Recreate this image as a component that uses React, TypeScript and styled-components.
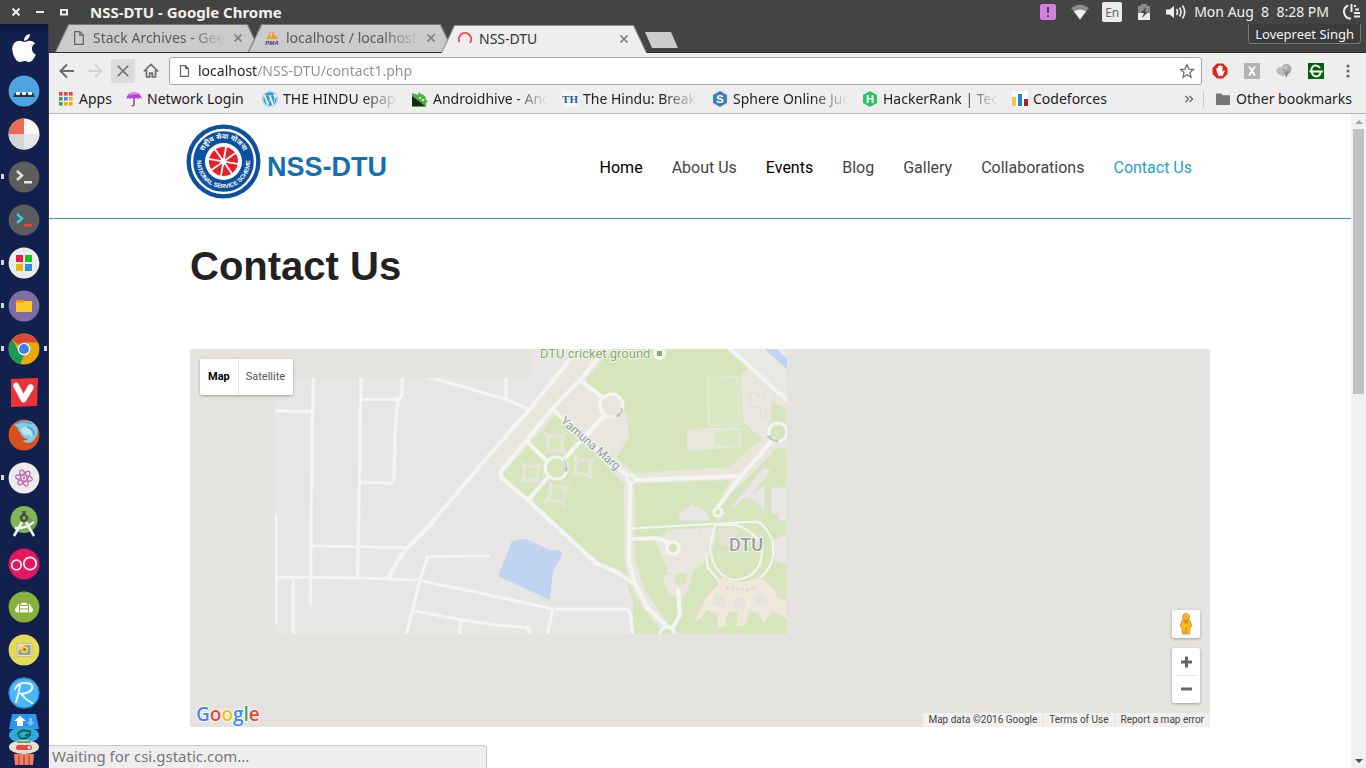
import React from "react";
import styled, { createGlobalStyle } from "styled-components";
import { FaApple, FaWordpress } from "react-icons/fa";

const ui = `"Noto Sans", "Open Sans", sans-serif`;

const Global = createGlobalStyle`
  *, *::before, *::after { box-sizing: border-box; }
  body { margin: 0; background: #fff; overflow: hidden; }
  button { border: 0; padding: 0; background: none; font: inherit; color: inherit; cursor: pointer; }
  a { color: inherit; text-decoration: none; }
  svg { display: block; }
`;

const Desktop = styled.div`
  display: flex;
  flex-direction: column;
  height: 100vh;
  font-family: ${ui};
`;

/* ---------- top panel ---------- */

const Panel = styled.header`
  display: flex;
  align-items: center;
  flex: none;
  height: 24px;
  padding: 0 4px 0 8px;
  background: #444;
  color: #f2f1ee;
  font-size: 14px;
`;

const WindowButton = styled.button`
  display: grid;
  place-items: center;
  width: 16px;
  height: 16px;
  margin-right: 8px;
`;

const WindowTitle = styled.strong`
  flex: 1;
  margin-left: 10px;
  padding-bottom: 1px;
  font-size: 15px;
  line-height: 20px;
`;

const Tray = styled.div`
  display: flex;
  align-items: center;
  gap: 12px;
`;

const TrayIcon = styled.button`
  display: grid;
  place-items: center;
  width: 20px;
  height: 20px;
`;

const Lang = styled.span`
  display: grid;
  place-items: center;
  width: 20px;
  height: 20px;
  border-radius: 2px;
  background: #ececec;
  color: #666;
  font-size: 12px;
`;

const Clock = styled.time`
  margin: 0 1px 0 -4px;
  padding-bottom: 1px;
  line-height: 20px;
  white-space: pre;
`;

/* ---------- launcher ---------- */

const Workspace = styled.div`
  display: flex;
  flex: 1;
  min-height: 0;
`;

const Launcher = styled.nav`
  display: flex;
  flex-direction: column;
  align-items: center;
  flex: none;
  width: 49px;
  padding-top: 2px;
  overflow: hidden;
  border-right: 1px solid #353848;
  background: linear-gradient(#0c1538, #12204e 10px);
`;

const Launch = styled.button<{ $running?: boolean; $focused?: boolean }>`
  position: relative;
  display: grid;
  place-items: center;
  flex: none;
  width: 48px;
  height: 43px;
  &::before, &::after {
    position: absolute;
    top: 19px;
    width: 3px;
    height: 5px;
    background: #d5d5da;
  }
  &::before { left: 1px; content: ${(p) => (p.$running ? '""' : "none")}; }
  &::after { right: 1px; content: ${(p) => (p.$focused ? '""' : "none")}; }
`;

const Folded = styled.button`
  flex: none;
  width: 30px;
  height: 13px;
  overflow: visible;
`;

/* ---------- browser frame ---------- */

const Browser = styled.div`
  display: flex;
  flex: 1;
  flex-direction: column;
  min-width: 0;
`;

const TabStrip = styled.div`
  display: flex;
  align-items: flex-end;
  flex: none;
  height: 29px;
  padding-left: 6px;
  border-bottom: 1px solid #2f2d2d;
  background: #444;
`;

const Tab = styled.div<{ $active?: boolean }>`
  position: relative;
  z-index: ${(p) => (p.$active ? 2 : 1)};
  display: flex;
  align-items: center;
  width: 206px;
  height: 28px;
  margin: 0 -13px ${(p) => (p.$active ? -1 : 0)}px 0;
  padding: 0 17px 0 16px;
  color: ${(p) => (p.$active ? "#333" : "#5a5a5a")};
  font-size: 14px;
  isolation: isolate;
  &::before, &::after {
    content: "";
    position: absolute;
    inset: 0;
    z-index: -2;
    background: ${(p) => (p.$active ? "#8f8f8f" : "#777")};
    clip-path: polygon(0 100%, 13px 0, calc(100% - 13px) 0, 100% 100%);
  }
  &::after {
    inset: 1px 1px 0;
    z-index: -1;
    background: ${(p) => (p.$active ? "#eee" : "#cbcbcb")};
  }
`;

const fade = "linear-gradient(to right, #000 calc(100% - 36px), transparent)";

const TabTitle = styled.span<{ $fade?: boolean }>`
  flex: 1;
  margin: 0 6px;
  padding-bottom: 1px;
  overflow: hidden;
  white-space: nowrap;
  mask-image: ${(p) => (p.$fade ? fade : "none")};
`;

const TabClose = styled.button`
  display: grid;
  place-items: center;
  width: 12px;
  height: 12px;
`;

const NewTab = styled.button`
  width: 33px;
  height: 16px;
  margin: 0 0 4px 11px;
  background: #cbcbcb;
  clip-path: polygon(0 0, 26px 0, 100% 100%, 7px 100%);
`;

const Profile = styled.button`
  align-self: flex-start;
  height: 20px;
  margin: 0 5px 0 auto;
  padding: 0 6px;
  border: 1px solid #777;
  border-top: 0;
  border-radius: 0 0 4px 4px;
  background: #3c3c3c;
  color: #f4f4f4;
  font-size: 13px;
  line-height: 20px;
`;

const Toolbar = styled.div`
  display: flex;
  align-items: center;
  flex: none;
  gap: 4px;
  height: 34px;
  padding: 2px 6px 0;
  background: #eee;
`;

const ToolButton = styled.button<{ $on?: boolean }>`
  display: grid;
  place-items: center;
  flex: none;
  width: 24px;
  height: 24px;
  border-radius: 2px;
  background: ${(p) => (p.$on ? "#dcdcdc" : "none")};
`;

const Extensions = styled.div`
  display: flex;
  gap: 8px;
  margin-left: 2px;
`;

const Omnibox = styled.label`
  display: flex;
  align-items: center;
  flex: 1;
  gap: 8px;
  height: 28px;
  margin-left: 2px;
  padding: 0 6px 0 9px;
  border: 1px solid #a9a9a9;
  border-radius: 3px;
  background: #fff;
`;

const Address = styled.input`
  flex: 1;
  min-width: 0;
  padding: 0 0 2px;
  border: 0;
  outline: 0;
  font: 14px ${ui};
  color: #8a8a8a;
  background: linear-gradient(to right, #222 59px, #8f8f8f 59px);
  background-clip: text;
  -webkit-background-clip: text;
  -webkit-text-fill-color: transparent;
`;

const Bookmarks = styled.nav`
  display: flex;
  align-items: center;
  flex: none;
  gap: 14px;
  height: 27px;
  padding: 0 0 2px 9px;
  border-bottom: 1px solid #b5b5b5;
  background: #eee;
  color: #222;
  font-size: 14px;
  line-height: 20px;
`;

const Bookmark = styled.a<{ $w: number; $fade?: boolean }>`
  display: flex;
  align-items: center;
  flex: none;
  gap: 5px;
  width: ${(p) => p.$w}px;
  span {
    flex: 1;
    padding-bottom: 1px;
    overflow: ${(p) => (p.$fade ? "hidden" : "visible")};
    white-space: nowrap;
    mask-image: ${(p) => (p.$fade ? fade : "none")};
  }
  svg { flex: none; }
`;

const More = styled.button`
  margin-left: auto;
  color: #666;
`;

const Other = styled.button`
  display: flex;
  align-items: center;
  gap: 5px;
  margin-left: -4px;
  padding: 0 14px 0 11px;
  border-left: 1px solid #c8c8c8;
  line-height: 16px;
`;

/* ---------- web page ---------- */

const Viewport = styled.div`
  position: relative;
  display: flex;
  flex: 1;
  min-height: 0;
  background: #fff;
`;

const Page = styled.div`
  flex: 1;
  min-width: 0;
  overflow: hidden;
`;

const SiteHeader = styled.header`
  border-bottom: 1px solid #2c9fc7;
`;

const Container = styled.div`
  max-width: 1020px;
  margin: 0 auto;
`;

const HeaderRow = styled(Container)`
  display: flex;
  align-items: center;
  justify-content: space-between;
  height: 104px;
  padding-right: 18px;
`;

const Brand = styled.a`
  display: flex;
  align-items: center;
  gap: 6px;
  margin: -10px 0 0 -4px;
  color: #1270b0;
  font: bold 27px/32px "Liberation Sans", Arial, sans-serif;
  span { padding-top: 12px; }
`;

const Menu = styled.ul`
  display: flex;
  gap: 29px;
  margin: 4px 0 0;
  padding: 0;
  list-style: none;
  font: 16px/24px Roboto, sans-serif;
`;

const MenuLink = styled.a<{ $tone: string }>`
  color: ${(p) => p.$tone};
`;

const Title = styled.h1`
  margin: 23px 0 59px;
  color: #222;
  font: bold 40px/48px "Liberation Sans", Arial, sans-serif;
`;

const MapBox = styled.section`
  position: relative;
  height: 378px;
  overflow: hidden;
  background: #e4e3df;
  font-family: Roboto, sans-serif;
`;

const MapArt = styled.svg`
  width: 100%;
  height: 100%;
`;

const MapTypes = styled.div`
  position: absolute;
  top: 10px;
  left: 10px;
  display: flex;
  height: 36px;
  border-radius: 2px;
  background: #fff;
  box-shadow: 0 1px 3px rgba(0, 0, 0, 0.3);
`;

const MapType = styled.button<{ $on?: boolean }>`
  padding: 0 8px 2px;
  color: ${(p) => (p.$on ? "#000" : "#565656")};
  font-size: 11px;
  font-weight: ${(p) => (p.$on ? 700 : 400)};
  & + & {
    padding-left: 7px;
    border-left: 1px solid #e8e8e8;
  }
`;

const MapTools = styled.div`
  position: absolute;
  right: 10px;
  bottom: 24px;
  display: flex;
  flex-direction: column;
  gap: 10px;
`;

const Card = styled.div`
  display: flex;
  flex-direction: column;
  align-items: center;
  width: 28px;
  border-radius: 2px;
  background: #fff;
  box-shadow: 0 1px 3px rgba(0, 0, 0, 0.3);
`;

const CardButton = styled.button`
  display: grid;
  place-items: center;
  width: 28px;
  height: 28px;
`;

const Rule = styled.hr`
  width: 19px;
  height: 1px;
  margin: -1px 0;
  border: 0;
  background: #e2e2e2;
`;

const Google = styled.a`
  position: absolute;
  left: 6px;
  bottom: 0;
  font: 19px/26px "Open Sans", sans-serif;
  font-weight: 600;
  text-shadow: 1px 0 #fff, -1px 0 #fff, 0 1px #fff, 0 -1px #fff;
`;

const Letter = styled.span<{ $c: string }>`
  color: ${(p) => p.$c};
`;

const Legal = styled.div`
  position: absolute;
  right: 0;
  bottom: 0;
  display: flex;
  gap: 1px;
  color: #444;
  font-size: 10px;
  line-height: 14px;
  > * {
    padding: 0 6px 0 5px;
    background: rgba(245, 245, 245, 0.72);
  }
`;

const ScrollBar = styled.div`
  display: flex;
  flex-direction: column;
  align-items: center;
  flex: none;
  width: 15px;
  background: #f1f1f1;
`;

const ScrollArrow = styled.button`
  display: grid;
  place-items: center;
  width: 15px;
  height: 15px;
`;

const Thumb = styled.div`
  width: 11px;
  height: 265px;
  margin-bottom: auto;
  background: #c1c1c1;
`;

const Status = styled.div`
  position: absolute;
  left: 0;
  bottom: 0;
  width: 438px;
  height: 23px;
  padding-left: 3px;
  border: solid #c4c4c4;
  border-width: 1px 1px 0 0;
  border-radius: 0 4px 0 0;
  background: #eee;
  color: #777;
  font-size: 15px;
  line-height: 21px;
`;

/* ---------- icons ---------- */

const PageIcon = () => (
  <svg width="16" height="14" viewBox="0 0 16 14" fill="none" stroke="#666" strokeWidth="1.2">
    <path d="M3.6.6h5.2l3.6 3.6v9.2H3.6zM8.8.6v3.6h3.6" />
  </svg>
);

const Cross = ({ s = 8, c = "#808080", w = 1.6 }: { s?: number; c?: string; w?: number }) => (
  <svg width={s} height={s} viewBox="0 0 8 8" stroke={c} strokeWidth={w}>
    <path d="M.5.5l7 7M7.5.5l-7 7" />
  </svg>
);

const Disc = ({ fill, children }: { fill: string; children?: React.ReactNode }) => (
  <svg width="32" height="32" viewBox="0 0 32 32">
    <circle cx="16" cy="16" r="15.4" fill={fill} />
    {children}
  </svg>
);

const apps: { name: string; running?: boolean; focused?: boolean; icon: React.ReactNode }[] = [
  { name: "Dash", icon: <FaApple size={32} color="#fff" /> },
  {
    name: "Dock",
    icon: (
      <Disc fill="#4da4e0">
        <path d="M7 18h18l2 4H5z" fill="#25333f" />
        <path d="M8.500 17.500h3v2h-3zM14.500 17.500h3v2h-3zM20.500 17.500h3v2h-3z" fill="#fff" stroke="#fff" />
      </Disc>
    ),
  },
  {
    name: "Disks",
    icon: (
      <Disc fill="#f8f8f8">
        <path d="M16 16V.6A15.4 15.4 0 0 0 .6 16z" fill="#ec6a56" />
        <path d="M16 16H.6A15.4 15.4 0 0 0 16 31.4z" fill="#d5d5d5" />
        <path d="M16 16v15.4A15.4 15.4 0 0 0 31.4 16z" fill="#e6e6e6" />
      </Disc>
    ),
  },
  {
    name: "Terminal",
    running: true,
    icon: (
      <Disc fill="#5c5c5c">
        <path d="M9 10l5 4.500-5 4.500" fill="none" stroke="#e4e4e4" strokeWidth="2.400" />
        <path d="M16 20h8v2.500h-8z" fill="#e4e4e4" />
      </Disc>
    ),
  },
  {
    name: "Terminator",
    icon: (
      <Disc fill="#5c5c5c">
        <path d="M9 10l5 4.500-5 4.500" fill="none" stroke="#35c8ea" strokeWidth="2.400" />
        <path d="M16 20h8v2.500h-8z" fill="#f0413c" />
      </Disc>
    ),
  },
  {
    name: "Software",
    running: true,
    icon: (
      <Disc fill="#ececec">
        <path d="M8 8h7v7H8z" fill="#ee1b45" />
        <path d="M17 8h7v7h-7z" fill="#16c522" />
        <path d="M8 17h7v7H8z" fill="#e5b80b" />
        <path d="M17 17h7v7h-7z" fill="#2a8fdc" />
      </Disc>
    ),
  },
  {
    name: "Files",
    running: true,
    icon: (
      <Disc fill="#7d6ea5">
        <path d="M8 10h8v4H8z" fill="#ff9100" />
        <path d="M8 12.500h7l1.500-1.500H24v11H8z" fill="#ffca28" />
      </Disc>
    ),
  },
  {
    name: "Google Chrome",
    running: true,
    focused: true,
    icon: (
      <Disc fill="#e8a90a">
        <path d="M16 16L4 6.500A15.400 15.400 0 0 1 29.800 9.400H16z" fill="#d8483b" />
        <path d="M4.200 6.200L10.500 18l6 2-4 11A15.400 15.400 0 0 1 4.200 6.200z" fill="#169a56" />
        <circle cx="16" cy="16" r="6.300" fill="#fff" />
        <circle cx="16" cy="16" r="5" fill="#3f7de8" />
      </Disc>
    ),
  },
  {
    name: "Vivaldi",
    icon: (
      <svg width="32" height="32" viewBox="0 0 32 32">
        <path d="M3 3l27-1-1 28-26 1z" fill="#ee3338" />
        <path d="M5 9.500a3 3 0 0 1 5.500-1.500l5 9.500 4-7a3.200 3.200 0 1 1 5.500 3L18 25q-2.500 3-5 0L5.500 11z" fill="#fff" />
      </svg>
    ),
  },
  {
    name: "Firefox Developer Edition",
    icon: (
      <Disc fill="#d9501f">
        <path d="M5 7Q13-1 24 3q6 4 6 10-2 9-9 11-5 0-6-3 4 1 5-1-6-1-8-7-2-1-2-4Q6 5 5 7z" fill="#7fcde8" />
        <path d="M13 10q5-5 9 0 4 5 1 9-1-4-4-3-5 0-6-6z" fill="#b9e4f3" />
        <path d="M7 5Q15 1 24 5M19 8q8 2 7 9" fill="none" stroke="#4aa5c9" strokeWidth="1.300" />
      </Disc>
    ),
  },
  {
    name: "Atom",
    running: true,
    icon: (
      <Disc fill="#ececec">
        <g fill="none" stroke="#c065ab" strokeWidth="1.100">
          <ellipse cx="16" cy="16" rx="8.500" ry="3" transform="rotate(10 16 16)" />
          <ellipse cx="16" cy="16" rx="8.500" ry="3" transform="rotate(70 16 16)" />
          <ellipse cx="16" cy="16" rx="8.500" ry="3" transform="rotate(130 16 16)" />
        </g>
        <circle cx="16" cy="16" r="1.200" fill="#c065ab" />
      </Disc>
    ),
  },
  {
    name: "Android Studio",
    icon: (
      <svg width="32" height="32" viewBox="0 0 32 32">
        <circle cx="16" cy="14.500" r="13.500" fill="#80b653" />
        <path d="M19 11l10 7a13.500 13.500 0 0 1-8 9z" fill="#6ea043" />
        <path d="M14 17L6 31M18 17l8 14" stroke="#f2f2f2" strokeWidth="2.600" fill="none" />
        <path d="M7 23q10 1 19-6" stroke="#f2f2f2" strokeWidth="2.400" fill="none" />
        <path d="M14.500 6h3v4h-3z" fill="#4c4c4c" />
        <circle cx="16" cy="13" r="3" fill="none" stroke="#4c4c4c" strokeWidth="2.400" />
      </svg>
    ),
  },
  {
    name: "oDesk",
    icon: (
      <Disc fill="#e5175f">
        <g fill="none" stroke="#fff" strokeWidth="1.700">
          <circle cx="8.500" cy="17" r="4.800" />
          <circle cx="22" cy="15.500" r="6.200" />
        </g>
      </Disc>
    ),
  },
  {
    name: "Robot",
    icon: (
      <Disc fill="#86b13a">
        <path d="M12 14a4.500 4.500 0 0 1 8 0v7.500h-8z" fill="#fff" />
        <path d="M11 12v9.500H9a2.500 2.500 0 0 1-1.500-4zM21 12v9.500h2a2.500 2.500 0 0 0 1.500-4z" fill="#fff" />
        <path d="M12 14.500h8M12 18h8" stroke="#86b13a" />
      </Disc>
    ),
  },
  {
    name: "Shotwell",
    icon: (
      <Disc fill="#e3da59">
        <path d="M9 9.500h15v13H9z" fill="#e9e6c8" stroke="#c4bd86" />
        <path d="M10.500 11h12v10h-12z" fill="#90a29c" />
        <path d="M10.500 11h6l-6 6z" fill="#ecd0d8" />
        <circle cx="16.500" cy="15.500" r="3.800" fill="#ecd03c" />
        <circle cx="16.500" cy="15.500" r="1.300" fill="#8a5b1c" />
      </Disc>
    ),
  },
  {
    name: "R",
    icon: (
      <Disc fill="#47b8fc">
        <circle cx="16" cy="16" r="15" fill="none" stroke="#2a79b8" />
        <path d="M12 8q-1 9-4 17M7 12Q10 5 19 6q7 1 5 6-2 4-11 5 5 6 11 9" fill="none" stroke="#fff" strokeWidth="1.900" strokeLinecap="round" />
      </Disc>
    ),
  },
];

const SiteLogo = () => (
  <svg width="75" height="75" viewBox="0 0 75 75">
    <circle cx="37.500" cy="37.500" r="37" fill="#0d50a0" />
    <circle cx="37.500" cy="37.500" r="31.500" fill="none" stroke="#fff" strokeWidth="2.400" />
    <circle cx="37.500" cy="37.500" r="18.500" fill="#fff" />
    <circle cx="37.500" cy="37.500" r="14.500" fill="#e8202c" />
    <g stroke="#fff" strokeWidth="1.800">
      {[0, 45, 90, 135].map((a) => (
        <path key={a} d="M37.500 22v31" transform={`rotate(${a + 10} 37.500 37.500)`} />
      ))}
    </g>
    <circle cx="37.500" cy="37.500" r="3" fill="#fff" />
    <path id="lower" d="M11.500 32.500A26.500 26.500 0 1 0 63.500 32.500" fill="none" />
    <path id="upper" d="M16.500 30A22 22 0 0 1 58.500 30" fill="none" />
    <g fill="#fff" fontFamily="Liberation Sans, Noto Sans, sans-serif">
      <text fontSize="6">
        <textPath href="#lower" startOffset="50%" textAnchor="middle">NATIONAL SERVICE SCHEME</textPath>
      </text>
      <text fontSize="7">
        <textPath href="#upper" startOffset="50%" textAnchor="middle">राष्ट्रीय सेवा योजना</textPath>
      </text>
    </g>
  </svg>
);

const road = "#f4f4f2";
const green = "#d6e5bb";
const beige = "#e9e6de";

const Hostel = ({ x, y, r = 0 }: { x: number; y: number; r?: number }) => (
  <path
    d="M-9-9l4 2h10l4-2-2 5v8l2 5-5-2h-8l-5 2 2-5v-8z"
    fill="none"
    stroke="#e7e5da"
    strokeWidth="3"
    transform={`translate(${x} ${y}) rotate(${r})`}
  />
);

const CampusMap = () => (
  <MapArt viewBox="190 349 1020 378" preserveAspectRatio="xMidYMid slice">
    <defs>
      <clipPath id="tiles">
        <path d="M275 378h255v-29h257v285H275z" />
      </clipPath>
    </defs>
    <g clipPath="url(#tiles)">
      <path d="M275 349h512v285H275z" fill="#e7e6e4" />
      <path d="M502 475L555 416 612 349H730L787 400V634H633V600L625 578 596 563z" fill={green} />
      <path d="M490 463L501 474 558 410 612 349H582L535 405z" fill={beige} />
      <path d="M552 408L580 382 585 380 602 398 627 414 629 437 616 457 634 473 730 467 762 438 743 422 740 377 750 365 787 400V410L773 402 771 420 787 424V449L777 448 745 480 726 498 722 494 731 480 634 484 635 560 645 590 668 624 680 634H664L640 603 630 585 624 560V484z" fill={beige} />
      <path d="M771 404l16 12v3l-16 6z" fill={green} />
      <path d="M730 349h57v51z" fill="#e9e8e4" />
      <path d="M766 345l26 23" stroke="#bed4f0" strokeWidth="8" />
      <path d="M512 541l13-2 25 11h8l4 3-2 6-7 11-3 30-52-24z" fill="#bed4f0" />
      <path d="M707 378l31-2 3 49-32 1z" fill="#d8e7c4" stroke="#e5ecd8" />
      <path d="M687 429l53-2 1 20-54 4z" fill={beige} />
      <path d="M715 432l24-2v16h-24z" fill="#d8e7c4" />
      <path d="M655 541l13-11 48-3v12l-8 20-15 12-5 20-8 7-10-3-7-13 5-13z" fill={beige} />
      <path d="M718 528l20-1v19h-18z" fill="#e5e1d3" />
      <g fill="#e8e7e3" stroke="#dedcd6" strokeWidth="0.800">
        <path d="M678 521q2-13 12-15l2-3 2 3q12 1 16 15z" />
        <path d="M670 530l32-2-2 8-12 14z" />
        <path d="M688 549l-23 22 15 8 10-7 -13-14" />
        <path d="M749 393l9-1v5h7v-5h9v9l-3 2v8h-6v6h-4v-10l-12 1v-5l3-2z" />
        <path d="M730 508l34-41 7 4-18 22 12-8v29l-10-14-12-1-9 9z" />
        <path d="M771 487h16v34h-9v-7h-7z" />
        <path d="M773 539l14-5v31l-12-3-4-12z" />
      </g>
      <g fill="none" stroke={road} strokeWidth="3.200" strokeLinejoin="round" strokeLinecap="round">
        <path d="M313.500 370L312 440 310.500 603M270 410.500L312 411.500M361 370L359.500 480 357.500 577M362 399.500H398L402 396 402.500 370M398 401L395 428 394 480 391 483 361 482.500" />
        <path d="M415 373L507 399.500 528 409M506 370V399M311 546L408 547.500M276 515.500V622M277 577L360 578 418 580 470 591 553 609H627L630 613 633 636M293.500 578V634M489 556L427.500 556.500 420 580 406 636M413.500 610.500L461.500 620 496 625 528 627.500 530 636M461.500 620L459 636M553 609L547 636" />
      </g>
      <g fill="none" stroke={road} strokeWidth="4.200" strokeLinejoin="round" strokeLinecap="round">
        <path d="M389 577L397 562 408 547 430 525 485 460 530 409 580 347M609 345L580 380 552 409 526 441 502 470Q499 474 503 479L528 500 596 563 617 572 633 583" />
        <path d="M580 380L602 397M605 415L566 457M552 409L631 479M526 441L546 460M548 477L528 500M635 480L741 476 771 442M741 476L718 507M630 484L629 562 635 583 647 607 667 627M632 539L657 538 668 542M673 627L680 615 678 590M730 349L789 402" />
        <circle cx="611.500" cy="405.500" r="11.500" fill={beige} strokeWidth="3.200" />
        <circle cx="556" cy="468" r="11" fill={green} strokeWidth="3.200" />
        <circle cx="778" cy="432" r="9" fill={green} strokeWidth="3.200" />
        <circle cx="631" cy="479" r="4" fill={beige} strokeWidth="2.500" />
        <circle cx="718" cy="512" r="4" fill={green} strokeWidth="3" />
        <circle cx="673" cy="548" r="6" fill={green} strokeWidth="3.200" />
        <circle cx="667" cy="634" r="7" fill={green} strokeWidth="3.200" />
      </g>
      <g fill="none" stroke={road} strokeWidth="2">
        <path d="M632 528.500L757 521.500Q768 527 773 543V556Q770 572 758 579M706 553L708 568 720 582" />
        <path d="M715 525H737Q755 532 762 546 764 577 735 580 712 577 710 545z" />
      </g>
      <circle cx="681" cy="579" r="6" fill={green} />
      <path d="M720 579q5-4 9 1 15 4 28-2l8 2 10 10 2 8 10 3v18l-14-8-5 6-5 6-5-10-9-2-4 15-8 0v-14h-9l-3 14-7 2-1-14-10-4-6 8-6 4 3-9 8-15 12-14z" fill="#efe9dc" stroke="#eadfcc" strokeWidth="0.800" />
      <path d="M716 594l9 3 1 10-14-2zM733 598h13l-1 11-12-1zM752 596l10-5 7 11-13 3z" fill="#e6e3dc" />
      <path d="M726 588l22 2 8-3" stroke="#e4dcca" strokeWidth="3" strokeDasharray="3 2" fill="none" />
      <Hostel x={555} y={443} />
      <Hostel x={583} y={467} r={8} />
      <Hostel x={531} y={473} r={4} />
      <Hostel x={557} y={494} r={12} />
      <g fill="none" stroke="#c3c5c9" strokeWidth="1.800">
        <path d="M622 408q0 5-4 8M564 460q3 4 2 9M778 441q-5 0-8-3" />
        <path d="M618 413l-2 4 4-1zM564 468l2 4 2-4zM771 435l-4 2 4 2z" fill="#c3c5c9" strokeWidth="1" />
      </g>
      <g fontFamily="Roboto, sans-serif" stroke="#f6f6f2" strokeWidth="2" paintOrder="stroke" strokeLinejoin="round">
        <text x="540" y="358" fontSize="13" fill="#86ad63">DTU cricket ground</text>
        <circle cx="659.500" cy="353.500" r="5.500" fill="#f6f6f2" />
        <text x="729" y="551" fontSize="18" fontWeight="500" fill="#9b9da0">DTU</text>
        <text fontSize="12" fill="#94969b" transform="translate(560 422) rotate(41)">Yamuna Marg</text>
      </g>
      <path d="M657 351h5v5h-5z" fill="#86ad63" />
    </g>
  </MapArt>
);

const Pegman = () => (
  <svg width="14" height="22" viewBox="0 0 14 22">
    <g fill="#fbb917" stroke="#b98a3c" strokeWidth="0.800">
      <path d="M3.500 7h7l2.500 6-2 1.500-.500 6.500H3.500L3 14.500 1 13z" />
      <circle cx="7" cy="4" r="3.500" />
    </g>
    <path d="M5 8h4l-2 3z" fill="#e2711d" />
    <path d="M7 14v7" stroke="#b98a3c" />
  </svg>
);

const HexIcon = ({ c, t }: { c: string; t: string }) => (
  <svg width="16" height="16" viewBox="0 0 16 16">
    <path d="M8 0l7 4v8l-7 4-7-4V4z" fill={c} />
    <text x="8" y="12" fontSize="11" fontWeight="bold" fill="#fff" textAnchor="middle" fontFamily="Liberation Sans">{t}</text>
  </svg>
);

const bookmarks: { text: string; w: number; fade?: boolean; icon: React.ReactNode }[] = [
  {
    text: "Apps",
    w: 54,
    icon: (
      <svg width="16" height="16" viewBox="0 0 16 16">
        {["#ea4335", "#ea4335", "#ea4335", "#34a05a", "#4285f4", "#f2ab0c", "#34a05a", "#f2ab0c", "#f2ab0c"].map((c, i) => (
          <rect key={i} x={1 + (i % 3) * 5} y={1 + Math.floor(i / 3) * 5} width="3.600" height="3.600" fill={c} />
        ))}
      </svg>
    ),
  },
  {
    text: "Network Login",
    w: 122,
    icon: (
      <svg width="16" height="16" viewBox="0 0 16 16">
        <path d="M0 8q1-6 8-7 7 1 8 7-2-2-4 0-2-2-4 0-2-2-4 0-2-2-4 0z" fill="#b93fe8" />
        <path d="M4 4q3-3 7-1" stroke="#e3a2fa" strokeWidth="1.500" fill="none" />
        <path d="M8 7v6.500q-.500 2-2.500 1" stroke="#555" strokeWidth="1.300" fill="none" />
      </svg>
    ),
  },
  { text: "THE HINDU epaper", w: 136, fade: true, icon: <FaWordpress size={16} color="#2a9ed0" /> },
  {
    text: "Androidhive - Android",
    w: 136,
    fade: true,
    icon: (
      <svg width="16" height="16" viewBox="0 0 16 16">
        <path d="M0 2l6 2 1-3 2 2q5 1 5 6l2 1-2 2v4H0z" fill="#4cb043" />
        <path d="M0 5l13 10H0z" fill="#1c221c" />
        <circle cx="8" cy="7" r="1" fill="#fff" />
        <circle cx="11" cy="9" r="1" fill="#fff" />
      </svg>
    ),
  },
  {
    text: "The Hindu: Breaking",
    w: 136,
    fade: true,
    icon: (
      <svg width="16" height="16" viewBox="0 0 16 16">
        <path d="M0 0h16v16H0z" fill="#f6f6f6" />
        <text x="8" y="12" fontSize="11" fontWeight="bold" fill="#1c5c9e" textAnchor="middle" fontFamily="Liberation Serif">TH</text>
      </svg>
    ),
  },
  { text: "Sphere Online Judge", w: 136, fade: true, icon: <HexIcon c="#3a7fc1" t="S" /> },
  { text: "HackerRank | Technical", w: 136, fade: true, icon: <HexIcon c="#27c468" t="H" /> },
  {
    text: "Codeforces",
    w: 110,
    icon: (
      <svg width="16" height="16" viewBox="0 0 16 16">
        <path d="M0 0h16v16H0z" fill="#fff" />
        <path d="M0 6h4v9H0z" fill="#f6c544" />
        <path d="M6 3h4v12H6z" fill="#1b89ce" />
        <path d="M12 8h4v7h-4z" fill="#b71c28" />
      </svg>
    ),
  },
];

const menu = [
  ["Home", "#000"],
  ["About Us", "#444"],
  ["Events", "#000"],
  ["Blog", "#444"],
  ["Gallery", "#444"],
  ["Collaborations", "#444"],
  ["Contact Us", "#2a9fc9"],
];

const Line = ({ d, c = "#666", w = 2 }: { d: string; c?: string; w?: number }) => (
  <svg width="16" height="16" viewBox="0 0 16 16" fill="none" stroke={c} strokeWidth={w}>
    <path d={d} />
  </svg>
);

export default function App() {
  return (
    <Desktop>
      <Global />
      <Panel>
        <WindowButton aria-label="Close window"><Cross c="#eee" w={2} /></WindowButton>
        <WindowButton aria-label="Minimize window"><Line d="M4 8h8" c="#eee" /></WindowButton>
        <WindowButton aria-label="Restore window"><Line d="M5 6h6v4.500H5z" c="#eee" w={2} /></WindowButton>
        <WindowTitle>NSS-DTU - Google Chrome</WindowTitle>
        <Tray>
          <TrayIcon aria-label="Notifications">
            <svg width="16" height="16" viewBox="0 0 16 16">
              <rect width="16" height="16" rx="2" fill="#d381e0" />
              <path d="M8 3v6M8 11v2" stroke="#444" strokeWidth="2" />
            </svg>
          </TrayIcon>
          <TrayIcon aria-label="Network">
            <svg width="18" height="16" viewBox="0 0 18 16">
              <path d="M0 4q9-7 18 0L9 15.500z" fill="#8e8e8e" />
              <path d="M3 7.500q6-4 12 0L9 15.500z" fill="#f0f0f0" />
            </svg>
          </TrayIcon>
          <Lang>En</Lang>
          <TrayIcon aria-label="Battery">
            <svg width="14" height="16" viewBox="0 0 14 16">
              <path d="M1 2h3V0h6v2h3v8H1z" fill="#8a8a8a" />
              <path d="M1 9h12v7H1z" fill="#ececec" />
              <path d="M9 3L4 9h3l-2 5 6-6H8z" fill="#444" />
            </svg>
          </TrayIcon>
          <TrayIcon aria-label="Sound">
            <svg width="20" height="16" viewBox="0 0 20 16" fill="none" stroke="#ececec" strokeWidth="1.700">
              <path d="M0 5.500h3.500L8 2v12l-4.500-3.500H0z" fill="#ececec" stroke="none" />
              <path d="M10.500 5q2 3 0 6M13.500 3.500q3 4.500 0 9M16.500 1.500q4.500 6.500 0 13" />
            </svg>
          </TrayIcon>
          <Clock>Mon Aug  8  8:28 PM</Clock>
          <TrayIcon aria-label="Session">
            <svg width="18" height="16" viewBox="0 0 18 16" fill="none" stroke="#ececec" strokeWidth="2">
              <path d="M5 1.500a7 7 0 0 0 3 13.300M8.500 0v8M12 5.500h4M11 9h6M11 12.500h6M11 2h2" />
            </svg>
          </TrayIcon>
        </Tray>
      </Panel>

      <Workspace>
        <Launcher aria-label="Launcher">
          {apps.map((a) => (
            <Launch key={a.name} aria-label={a.name} $running={a.running} $focused={a.focused}>
              {a.icon}
            </Launch>
          ))}
          <Folded aria-label="Transfers">
            <svg width="30" height="16" viewBox="0 0 30 16">
              <path d="M3 0h24l3 15H0z" fill="#2b93f0" />
              <path d="M11 2l6 5h-3v5H8V7H5z" fill="#fff" />
              <path d="M20 4h3v4h3l-4.500 4L17 8h3z" fill="#7fc0f7" />
            </svg>
          </Folded>
          <Folded aria-label="Updater">
            <svg width="30" height="16" viewBox="0 0 30 16">
              <ellipse cx="15" cy="8" rx="15" ry="8" fill="#2eaae0" />
              <path d="M21 5q-8-4-12 2 1 6 8 4l4-3M21 3v5h-5" fill="none" stroke="#126a4c" strokeWidth="2" />
            </svg>
          </Folded>
          <Folded aria-label="Settings">
            <svg width="30" height="14" viewBox="0 0 30 14">
              <ellipse cx="15" cy="7" rx="15" ry="7" fill="#e6e3d5" />
              <path d="M8 2h14" stroke="#5cab72" strokeWidth="2" />
              <rect x="7" y="5" width="16" height="5" rx="2.500" fill="#e9493d" />
              <circle cx="20" cy="7.500" r="1.500" fill="#fff" />
            </svg>
          </Folded>
          <Folded aria-label="Trash">
            <svg width="30" height="13" viewBox="0 0 30 13">
              <path d="M5 1h20l-1 11H6z" fill="#f0806a" />
              <path d="M10 2v10M15 2v10M20 2v10" stroke="#b84c3c" strokeWidth="1.500" />
            </svg>
          </Folded>
        </Launcher>

        <Browser>
          <TabStrip>
            <Tab>
              <PageIcon />
              <TabTitle $fade>Stack Archives - GeeksforGeeks</TabTitle>
              <TabClose aria-label="Close tab"><Cross /></TabClose>
            </Tab>
            <Tab>
              <svg width="16" height="16" viewBox="0 0 16 16">
                <path d="M2 9Q5 6 6 1l1 8zM7 9l2-8 3 8zM11 5l3 4h-2z" fill="#f39a2c" />
                <text x="8" y="15" fontSize="6" fontWeight="bold" fontStyle="italic" fill="#3b3c78" textAnchor="middle" fontFamily="Liberation Sans">PMA</text>
              </svg>
              <TabTitle $fade>localhost / localhost</TabTitle>
              <TabClose aria-label="Close tab"><Cross /></TabClose>
            </Tab>
            <Tab $active>
              <svg width="16" height="16" viewBox="0 0 16 16">
                <path d="M2.500 11A6.200 6.200 0 1 1 13 12" fill="none" stroke="#f0544b" strokeWidth="2" />
              </svg>
              <TabTitle>NSS-DTU</TabTitle>
              <TabClose aria-label="Close tab"><Cross /></TabClose>
            </Tab>
            <NewTab aria-label="New tab" />
            <Profile>Lovepreet Singh</Profile>
          </TabStrip>

          <Toolbar>
            <ToolButton aria-label="Back"><Line d="M15 8H2M8 1.500L1.500 8 8 14.500" c="#6b6b6b" /></ToolButton>
            <ToolButton aria-label="Forward"><Line d="M1 8h13M8 1.500L14.500 8 8 14.500" c="#d2d2d2" /></ToolButton>
            <ToolButton aria-label="Stop" $on><Cross s={12} c="#6b6b6b" w={1} /></ToolButton>
            <ToolButton aria-label="Home">
              <Line d="M.8 8.500L8 1.500l7.200 7M3.500 7v7h3.200v-4h2.600v4h3.200V7" c="#6b6b6b" w={1.7} />
            </ToolButton>
            <Omnibox>
              <svg width="11" height="12" viewBox="0 0 11 12" fill="none" stroke="#666" strokeWidth="1.200">
                <path d="M1.500.6h5L9.500 3.600v7.800h-8zM6.500.6v3h3" />
              </svg>
              <Address aria-label="Address" defaultValue="localhost/NSS-DTU/contact1.php" />
              <svg width="16" height="16" viewBox="0 0 16 16" fill="none" stroke="#6b6b6b" strokeWidth="1.300">
                <path d="M8 1.800l1.900 4.300 4.600.4-3.500 3.100 1 4.600L8 11.800l-4 2.400 1-4.600L1.500 6.500l4.600-.4z" />
              </svg>
            </Omnibox>
            <Extensions>
              <ToolButton aria-label="AdBlock">
                <svg width="16" height="16" viewBox="0 0 16 16">
                  <path d="M5 .5h6L15.500 5v6L11 15.500H5L.5 11V5z" fill="#e2231a" />
                  <path d="M4.500 8V5H6V3h1.500v-.8H9V3h1.500v6l1-1.500H13L10.500 13h-4z" fill="#fff" />
                </svg>
              </ToolButton>
              <ToolButton aria-label="X extension">
                <svg width="16" height="16" viewBox="0 0 16 16">
                  <rect width="16" height="16" rx="1" fill="#b4b4b4" />
                  <path d="M5 3.500l6 9M11 3.500l-6 9" stroke="#fff" strokeWidth="1.700" />
                </svg>
              </ToolButton>
              <ToolButton aria-label="Globe extension">
                <svg width="16" height="16" viewBox="0 0 16 16">
                  <circle cx="10.500" cy="6" r="5" fill="#a9a9a9" />
                  <circle cx="9.500" cy="4.500" r="2" fill="#c9c9c9" />
                  <path d="M0 8q1-4 5-4 0 4 4 5l-1 4Q3 13 0 8z" fill="#bbb" />
                  <path d="M8 9l6-1-4 7z" fill="#8d8d8d" />
                </svg>
              </ToolButton>
              <ToolButton aria-label="GeeksforGeeks">
                <svg width="16" height="16" viewBox="0 0 16 16">
                  <path d="M0 0h16v16H0z" fill="#04610a" />
                  <path d="M12 5Q10 2 6.500 2.500 3 4 3.500 8q.500 5 5 5.500 4-.500 4-5H1.500M8 8.500h7" fill="none" stroke="#fff" strokeWidth="1.900" />
                </svg>
              </ToolButton>
              <ToolButton aria-label="Menu">
                <svg width="4" height="14" viewBox="0 0 4 14" fill="#6b6b6b">
                  <circle cx="2" cy="2" r="1.600" />
                  <circle cx="2" cy="7" r="1.600" />
                  <circle cx="2" cy="12" r="1.600" />
                </svg>
              </ToolButton>
            </Extensions>
          </Toolbar>

          <Bookmarks aria-label="Bookmarks">
            {bookmarks.map((b) => (
              <Bookmark key={b.text} href="#" $w={b.w} $fade={b.fade}>
                {b.icon}
                <span>{b.text}</span>
              </Bookmark>
            ))}
            <More aria-label="More bookmarks">
              <svg width="8" height="8" viewBox="0 0 8 8" fill="none" stroke="#666" strokeWidth="1.300">
                <path d="M.5 1l3 3-3 3M4.500 1l3 3-3 3" />
              </svg>
            </More>
            <Other>
              <svg width="16" height="14" viewBox="0 0 16 14">
                <path d="M1 1.500h5l1.500 1.800H15V13H1z" fill="#757575" />
              </svg>
              Other bookmarks
            </Other>
          </Bookmarks>

          <Viewport>
            <Page>
              <SiteHeader>
                <HeaderRow>
                  <Brand href="#">
                    <SiteLogo />
                    <span>NSS-DTU</span>
                  </Brand>
                  <Menu>
                    {menu.map(([text, tone]) => (
                      <li key={text}>
                        <MenuLink href="#" $tone={tone}>{text}</MenuLink>
                      </li>
                    ))}
                  </Menu>
                </HeaderRow>
              </SiteHeader>
              <Container as="main">
                <Title>Contact Us</Title>
                <MapBox aria-label="Map">
                  <CampusMap />
                  <MapTypes>
                    <MapType $on>Map</MapType>
                    <MapType>Satellite</MapType>
                  </MapTypes>
                  <MapTools>
                    <Card>
                      <CardButton aria-label="Street View"><Pegman /></CardButton>
                    </Card>
                    <Card>
                      <CardButton aria-label="Zoom in"><Line d="M3 8h11M8.500 2.500v11" w={3} /></CardButton>
                      <Rule />
                      <CardButton aria-label="Zoom out"><Line d="M3 8h11" w={3} /></CardButton>
                    </Card>
                  </MapTools>
                  <Google href="#">
                    <Letter $c="#4285f4">G</Letter>
                    <Letter $c="#ea4335">o</Letter>
                    <Letter $c="#fbbc05">o</Letter>
                    <Letter $c="#4285f4">g</Letter>
                    <Letter $c="#34a853">l</Letter>
                    <Letter $c="#ea4335">e</Letter>
                  </Google>
                  <Legal>
                    <span>Map data ©2016 Google</span>
                    <a href="#">Terms of Use</a>
                    <a href="#">Report a map error</a>
                  </Legal>
                </MapBox>
              </Container>
            </Page>
            <ScrollBar>
              <ScrollArrow aria-label="Scroll up">
                <svg width="8" height="4" viewBox="0 0 8 4"><path d="M0 4l4-4 4 4z" fill="#a3a3a3" /></svg>
              </ScrollArrow>
              <Thumb />
              <ScrollArrow aria-label="Scroll down">
                <svg width="8" height="4" viewBox="0 0 8 4"><path d="M0 0l4 4 4-4z" fill="#505050" /></svg>
              </ScrollArrow>
            </ScrollBar>
            <Status role="status">Waiting for csi.gstatic.com...</Status>
          </Viewport>
        </Browser>
      </Workspace>
    </Desktop>
  );
}
